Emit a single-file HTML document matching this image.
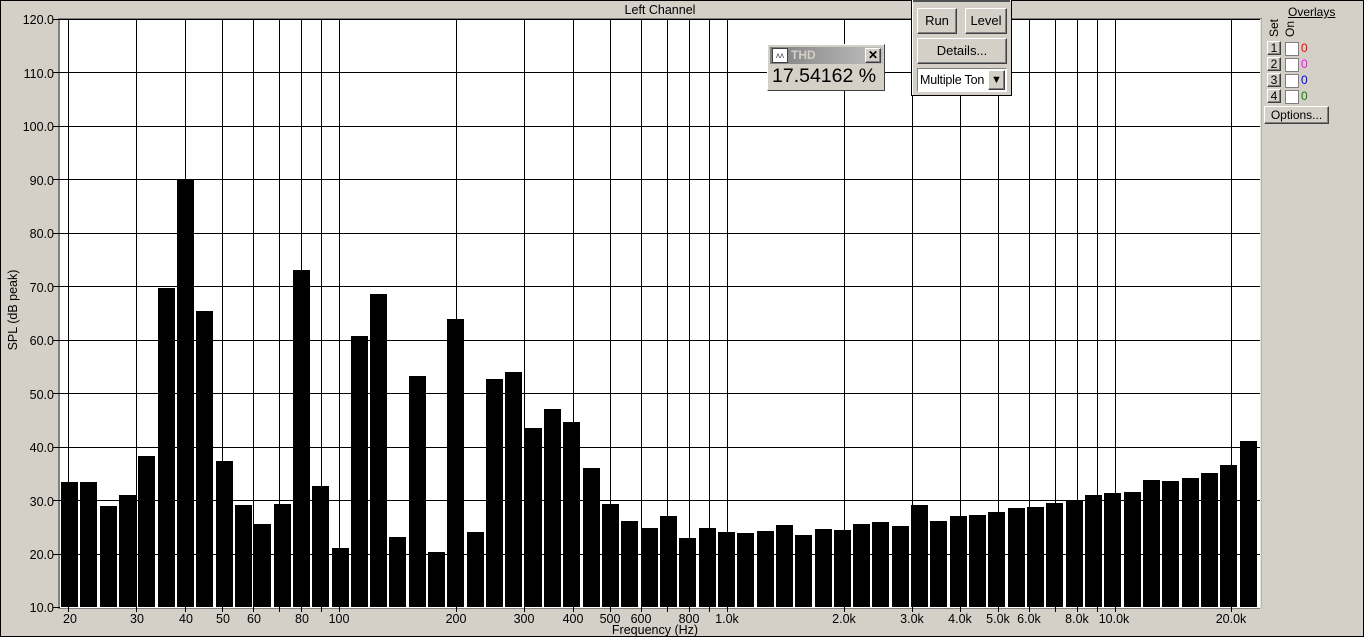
<!DOCTYPE html>
<html><head><meta charset="utf-8"><style>
body{margin:0;width:1364px;height:637px;overflow:hidden;background:#d4d0c8;font-family:"Liberation Sans",sans-serif;position:relative}
.b{position:absolute;box-sizing:border-box;background:#d4d0c8;border:1px solid;border-color:#fff #404040 #404040 #fff;box-shadow:inset -1px -1px 0 #808080;font-size:13px;text-align:center;color:#000}
</style></head><body>
<svg width="1364" height="637" style="position:absolute;left:0;top:0" font-family="Liberation Sans, sans-serif">
<rect x="0.5" y="0.5" width="1363" height="636" fill="#d4d0c8" stroke="#000"/>
<rect x="58" y="18" width="1204" height="591" fill="#808080"/>
<rect x="60" y="19" width="1200" height="589" fill="#fff"/>
<rect x="1260" y="19" width="1.5" height="590" fill="#e8e6e0"/>
<g stroke="#000" stroke-width="1">
<path d="M60 19.5H1260M60 72.5H1260M60 126.5H1260M60 179.5H1260M60 233.5H1260M60 286.5H1260M60 340.5H1260M60 393.5H1260M60 447.5H1260M60 500.5H1260M60 554.5H1260"/>
<path d="M68.5 19V612M136.5 19V612M185.5 19V612M222.5 19V612M253.5 19V612M279.5 19V612M301.5 19V612M321.5 19V612M339.5 19V612M456.5 19V612M524.5 19V612M573.5 19V612M610.5 19V612M641.5 19V612M667.5 19V612M689.5 19V612M709.5 19V612M727.5 19V612M844.5 19V612M912.5 19V612M960.5 19V612M998.5 19V612M1029.5 19V612M1055.5 19V612M1077.5 19V612M1097.5 19V612M1115.5 19V612M1231.5 19V612"/>
<path d="M53 19.5H60M53 72.5H60M53 126.5H60M53 179.5H60M53 233.5H60M53 286.5H60M53 340.5H60M53 393.5H60M53 447.5H60M53 500.5H60M53 554.5H60M53 607.5H60"/>
</g>
<g fill="#000">
<rect x="61" y="482" width="17" height="125"/>
<rect x="80" y="482" width="17" height="125"/>
<rect x="100" y="506" width="17" height="101"/>
<rect x="119" y="495" width="17" height="112"/>
<rect x="138" y="456" width="17" height="151"/>
<rect x="158" y="288" width="17" height="319"/>
<rect x="177" y="180" width="17" height="427"/>
<rect x="196" y="311" width="17" height="296"/>
<rect x="216" y="461" width="17" height="146"/>
<rect x="235" y="505" width="17" height="102"/>
<rect x="254" y="524" width="17" height="83"/>
<rect x="274" y="504" width="17" height="103"/>
<rect x="293" y="270" width="17" height="337"/>
<rect x="312" y="486" width="17" height="121"/>
<rect x="332" y="548" width="17" height="59"/>
<rect x="351" y="336" width="17" height="271"/>
<rect x="370" y="294" width="17" height="313"/>
<rect x="389" y="537" width="17" height="70"/>
<rect x="409" y="376" width="17" height="231"/>
<rect x="428" y="552" width="17" height="55"/>
<rect x="447" y="319" width="17" height="288"/>
<rect x="467" y="532" width="17" height="75"/>
<rect x="486" y="379" width="17" height="228"/>
<rect x="505" y="372" width="17" height="235"/>
<rect x="525" y="428" width="17" height="179"/>
<rect x="544" y="409" width="17" height="198"/>
<rect x="563" y="422" width="17" height="185"/>
<rect x="583" y="468" width="17" height="139"/>
<rect x="602" y="504" width="17" height="103"/>
<rect x="621" y="521" width="17" height="86"/>
<rect x="641" y="528" width="17" height="79"/>
<rect x="660" y="516" width="17" height="91"/>
<rect x="679" y="538" width="17" height="69"/>
<rect x="699" y="528" width="17" height="79"/>
<rect x="718" y="532" width="17" height="75"/>
<rect x="737" y="533" width="17" height="74"/>
<rect x="757" y="531" width="17" height="76"/>
<rect x="776" y="525" width="17" height="82"/>
<rect x="795" y="535" width="17" height="72"/>
<rect x="815" y="529" width="17" height="78"/>
<rect x="834" y="530" width="17" height="77"/>
<rect x="853" y="524" width="17" height="83"/>
<rect x="872" y="522" width="17" height="85"/>
<rect x="892" y="526" width="17" height="81"/>
<rect x="911" y="505" width="17" height="102"/>
<rect x="930" y="521" width="17" height="86"/>
<rect x="950" y="516" width="17" height="91"/>
<rect x="969" y="515" width="17" height="92"/>
<rect x="988" y="512" width="17" height="95"/>
<rect x="1008" y="508" width="17" height="99"/>
<rect x="1027" y="507" width="17" height="100"/>
<rect x="1046" y="503" width="17" height="104"/>
<rect x="1066" y="500" width="17" height="107"/>
<rect x="1085" y="495" width="17" height="112"/>
<rect x="1104" y="493" width="17" height="114"/>
<rect x="1124" y="492" width="17" height="115"/>
<rect x="1143" y="480" width="17" height="127"/>
<rect x="1162" y="481" width="17" height="126"/>
<rect x="1182" y="478" width="17" height="129"/>
<rect x="1201" y="473" width="17" height="134"/>
<rect x="1220" y="465" width="17" height="142"/>
<rect x="1240" y="441" width="17" height="166"/>
</g>
<g font-size="12.5" fill="#000" text-anchor="end">
<text x="54" y="24">120.0</text><text x="54" y="78">110.0</text><text x="54" y="131">100.0</text><text x="54" y="185">90.0</text><text x="54" y="238">80.0</text><text x="54" y="292">70.0</text><text x="54" y="345">60.0</text><text x="54" y="399">50.0</text><text x="54" y="452">40.0</text><text x="54" y="506">30.0</text><text x="54" y="559">20.0</text><text x="54" y="612">10.0</text>
</g>
<g font-size="12.5" fill="#000" text-anchor="middle">
<text x="70" y="623">20</text><text x="137" y="623">30</text><text x="186" y="623">40</text><text x="223" y="623">50</text><text x="254" y="623">60</text><text x="302" y="623">80</text><text x="339" y="623">100</text><text x="456" y="623">200</text><text x="524" y="623">300</text><text x="573" y="623">400</text><text x="610" y="623">500</text><text x="641" y="623">600</text><text x="689" y="623">800</text><text x="727" y="623">1.0k</text><text x="844" y="623">2.0k</text><text x="912" y="623">3.0k</text><text x="960" y="623">4.0k</text><text x="998" y="623">5.0k</text><text x="1029" y="623">6.0k</text><text x="1077" y="623">8.0k</text><text x="1114" y="623">10.0k</text><text x="1231" y="623">20.0k</text>
<text x="655" y="634">Frequency (Hz)</text>
<text x="660" y="14">Left Channel</text>
<text transform="translate(17,310) rotate(-90)">SPL (dB peak)</text>
</g>
</svg>
<div style="position:absolute;left:911px;top:-1px;width:101px;height:97px;box-sizing:border-box;border:1px solid #000;background:#d4d0c8;box-shadow:inset 1px 1px 0 #fff"></div>
<div style="position:absolute;left:913px;top:0;width:97px;height:2px;background:#505050"></div>
<div class="b" style="left:917px;top:8px;width:40px;height:26px;line-height:24px">Run</div>
<div class="b" style="left:965px;top:8px;width:42px;height:26px;line-height:24px">Level</div>
<div class="b" style="left:917px;top:38px;width:90px;height:26px;line-height:24px">Details...</div>
<div style="position:absolute;left:917px;top:68px;width:90px;height:24px;box-sizing:border-box;border:1px solid;border-color:#808080 #fff #fff #808080;background:#fff;font-size:12.5px;line-height:22px;padding-left:2px;overflow:hidden;white-space:nowrap;letter-spacing:-0.2px">Multiple Ton</div>
<div class="b" style="left:988px;top:70px;width:17px;height:20px;font-size:11px;line-height:18px">&#9660;</div>
<div style="position:absolute;left:767px;top:44px;width:118px;height:47px;box-sizing:border-box;border:1px solid;border-color:#fff #404040 #404040 #fff;background:#d4d0c8"></div>
<div style="position:absolute;left:770px;top:47px;width:113px;height:17px;background:linear-gradient(90deg,#808080,#c0c0c0)"></div>
<div style="position:absolute;left:772px;top:48px;width:16px;height:15px;background:#fff;border:1px solid #404040;box-sizing:border-box;font-size:8px;line-height:13px;text-align:center;color:#444">ᴧᴧ</div>
<div style="position:absolute;left:791px;top:48px;font-size:12px;font-weight:bold;color:#d4d0c8;line-height:15px">THD</div>
<div class="b" style="left:865px;top:48px;width:16px;height:15px;font-size:12px;font-weight:bold;line-height:12px">✕</div>
<div style="position:absolute;left:772px;top:64px;font-size:19.5px;line-height:24px;color:#000">17.54162 %</div>
<div style="position:absolute;left:1288px;top:5px;font-size:12px;text-decoration:underline;color:#000">Overlays</div>
<div style="position:absolute;left:1267px;top:37px;font-size:12px;transform:rotate(-90deg);transform-origin:0 0;color:#000">Set</div>
<div style="position:absolute;left:1283px;top:37px;font-size:12px;transform:rotate(-90deg);transform-origin:0 0;color:#000">On</div>
<div class="b" style="left:1267px;top:41px;width:14px;height:14px;font-size:12px;line-height:12px">1</div>
<div class="b" style="left:1267px;top:57px;width:14px;height:14px;font-size:12px;line-height:12px">2</div>
<div class="b" style="left:1267px;top:73px;width:14px;height:14px;font-size:12px;line-height:12px">3</div>
<div class="b" style="left:1267px;top:89px;width:14px;height:14px;font-size:12px;line-height:12px">4</div>
<div style="position:absolute;left:1285px;top:42px;width:12px;height:12px;background:#fff;border:1px solid #808080"></div>
<div style="position:absolute;left:1285px;top:58px;width:12px;height:12px;background:#fff;border:1px solid #808080"></div>
<div style="position:absolute;left:1285px;top:74px;width:12px;height:12px;background:#fff;border:1px solid #808080"></div>
<div style="position:absolute;left:1285px;top:90px;width:12px;height:12px;background:#fff;border:1px solid #808080"></div>
<div style="position:absolute;left:1301px;top:41px;font-size:12px;color:#f00">0</div>
<div style="position:absolute;left:1301px;top:57px;font-size:12px;color:#f0f">0</div>
<div style="position:absolute;left:1301px;top:73px;font-size:12px;color:#00f">0</div>
<div style="position:absolute;left:1301px;top:89px;font-size:12px;color:#080">0</div>
<div class="b" style="left:1264px;top:106px;width:65px;height:18px;font-size:12px;line-height:16px">Options...</div>
</body></html>
